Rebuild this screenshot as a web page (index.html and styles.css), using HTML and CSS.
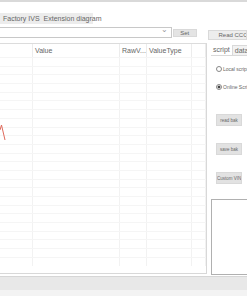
FILE: index.html
```html
<!DOCTYPE html>
<html lang="en">
<head>
  <meta charset="UTF-8" />
  <title>Script Tool</title>
  <link rel="stylesheet" href="styles.css">
</head>
<body>
  <div class="window">
    <div class="topline"></div>
    <div class="menubar">
      <div class="menu-group">
        <span>Factory IVS</span>
        <span>Extension diagram</span>
      </div>
    </div>

    <div class="toolbar">
      <div class="combo"><span class="arrow">&#8964;</span></div>
      <button class="btn set">Set</button>
      <button class="btn read">Read CCC</button>
    </div>

    <div class="main">
      <div class="grid">
        <div class="header">
          <div class="c1"></div>
          <div class="c2">Value</div>
          <div class="c3">RawV...</div>
          <div class="c4">ValueType</div>
          <div class="c5"></div>
        </div>
        <div class="rows" id="rows"></div>
        <svg class="mark" width="8" height="20" viewBox="0 0 8 20">
          <path d="M0 8 L1.5 3 L5 18" fill="none" stroke="#e06a5c" stroke-width="1"/>
        </svg>
      </div>

      <div class="side">
        <div class="tabs">
          <span class="tab active">script</span>
          <span class="tab">data</span>
        </div>
        <div class="pane">
          <label class="radio"><span class="dot"></span>Local script</label>
          <label class="radio"><span class="dot on"></span>Online Script</label>
          <button class="btn side-btn first">read bak</button>
          <button class="btn side-btn">save bak</button>
          <button class="btn side-btn">Custom VIN</button>
          <div class="textbox"></div>
        </div>
      </div>
    </div>

    <div class="statusbar"></div>
    <div class="footer"></div>
  </div>

  <script>
    const rows = document.getElementById('rows');
    for (let i = 0; i < 24; i++) {
      const row = document.createElement('div');
      row.className = 'row';
      row.innerHTML = '<div class="c1"></div><div class="c2"></div><div class="c3"></div><div class="c4"></div><div class="c5"></div>';
      rows.appendChild(row);
    }
  </script>
</body>
</html>
```

FILE: styles.css
```css
body {
  margin: 0;
  font-family: "Liberation Sans", Arial, sans-serif;
  font-size: 7px;
  color: #666;
  background: #fff;
}

.window {
  width: 247px;
  height: 296px;
  overflow: hidden;
  position: relative;
}

.topline {
  height: 2px;
  background: #d9d9d9;
  margin-bottom: 11px;
}

.menubar {
  height: 11px;
  display: flex;
}
.menu-group {
  width: 93px;
  background: #ececec;
  display: flex;
  align-items: center;
  gap: 4px;
  padding-left: 3px;
  box-sizing: border-box;
  white-space: nowrap;
}

.toolbar {
  height: 16px;
  margin-top: 3px;
  display: flex;
  align-items: flex-start;
}
.combo {
  width: 175px;
  height: 11px;
  box-sizing: border-box;
  border: 1px solid #c8c8c8;
  border-left: none;
  position: relative;
}
.combo .arrow {
  position: absolute;
  right: 3px;
  top: -3px;
  font-size: 8px;
  color: #999;
}

.btn {
  font-family: inherit;
  font-size: 6px;
  color: #666;
  background: #e4e4e4;
  border: 1px solid #d9d9d9;
  padding: 0;
  white-space: nowrap;
  overflow: hidden;
}
.btn.set {
  width: 24px;
  height: 8px;
  margin: 2px 0 0 1px;
  line-height: 6px;
}
.btn.read {
  width: 40px;
  height: 10px;
  margin: 3px 0 0 11px;
  text-align: left;
  padding-left: 10px;
  background: #ededed;
}

.main {
  display: flex;
  height: 231px;
}

.grid {
  width: 207px;
  position: relative;
  border-top: 1px solid #dcdcdc;
  border-bottom: 1px solid #d8d8d8;
  border-right: 1px solid #d8d8d8;
  box-sizing: border-box;
}
.header, .row {
  display: grid;
  grid-template-columns: 33px 87px 27px 45px 1fr;
}
.header {
  height: 13px;
  align-items: center;
}
.header > div {
  padding-left: 2px;
  border-right: 1px solid #ececec;
  height: 100%;
  line-height: 13px;
  white-space: nowrap;
  overflow: hidden;
}
.row {
  height: 8.7px;
  border-top: 1px solid #f5f5f5;
  box-sizing: border-box;
}
.row > div {
  border-right: 1px solid #f2f2f2;
}
.mark {
  position: absolute;
  left: 0;
  top: 78px;
}

.side {
  width: 40px;
  position: relative;
}
.tabs {
  display: flex;
  margin: 2px 0 0 4px;
  height: 10px;
}
.tab {
  padding: 0 2px;
  line-height: 10px;
}
.tab + .tab {
  border: 1px solid #d9d9d9;
  border-bottom: none;
  background: #f2f2f2;
  line-height: 9px;
  flex: 1;
}
.pane {
  border-top: 1px solid #d9d9d9;
  margin-left: 4px;
  height: 218px;
  box-sizing: border-box;
  padding-left: 5px;
  font-size: 5px;
}
.radio {
  display: flex;
  align-items: center;
  gap: 1px;
  margin-top: 10px;
  white-space: nowrap;
}
.radio + .radio { margin-top: 12px; }
.dot {
  flex-shrink: 0;
  width: 4px;
  height: 4px;
  border: 1px solid #888;
  border-radius: 50%;
  box-sizing: content-box;
}
.dot.on {
  background: radial-gradient(circle, #444 0 45%, #fff 60%);
}
.side-btn {
  display: block;
  width: 26px;
  height: 12px;
  margin-top: 17px;
  font-size: 4.5px;
  background: #e2e2e2;
}
.side-btn.first { margin-top: 24px; }
.textbox {
  margin: 15px -8px 0 -5px;
  height: 74px;
  border: 1px solid #b0b0b0;
  border-right: none;
}

.statusbar {
  margin-top: 2px;
  height: 13px;
  background: #e8e8e8;
  border-top: 1px solid #d6d6d6;
}
.footer {
  height: 7px;
  background: #f3f3f3;
}
```
